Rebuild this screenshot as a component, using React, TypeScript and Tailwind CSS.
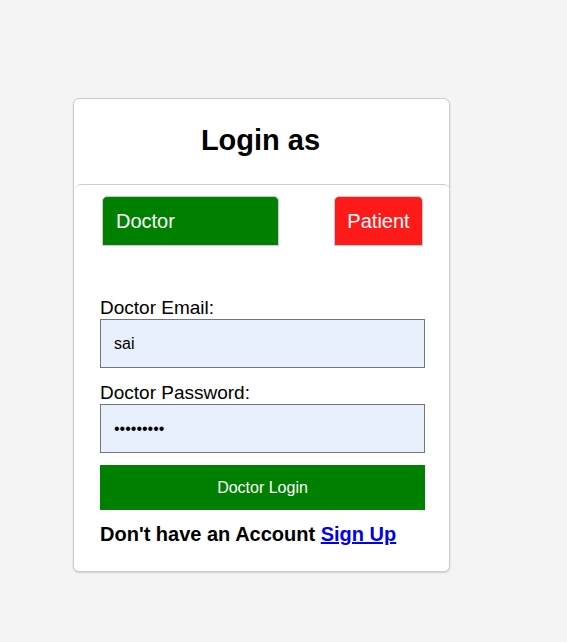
import React, { useState } from 'react';

const App: React.FC = () => {
  const [role, setRole] = useState<'doctor' | 'patient'>('doctor');

  return (
    <div className="min-h-screen bg-[#f4f4f4] pt-[98px] pl-[73px] font-['Liberation_Sans',Arial,sans-serif] text-black">
      <div className="w-[377px] bg-white border border-[#cccccc] rounded-[6px] shadow-[0_1px_2px_rgba(0,0,0,0.15)]">
        {/* header */}
        <div className="h-[85px] flex items-center justify-center">
          <h2 className="text-[29px] font-bold leading-none -ml-[2px] -mt-[2px]">Login as</h2>
        </div>

        {/* role + form */}
        <div className="border-t border-[#cccccc] rounded-t-[6px] -mr-px ml-px px-[25px] pt-[11px] pb-[25px]">
          <div className="flex justify-between pl-[2px] pr-[2px]">
            <button
              className="w-[177px] h-[50px] text-left pl-[13px] text-[20px] text-white bg-[#008000] border border-[#cccccc] rounded-t-[5px]"
              onClick={() => setRole('doctor')}
            >
              Doctor
            </button>
            <button
              className="w-[89px] h-[50px] text-center text-[20px] text-white bg-[#ff1a1a] border border-[#cccccc] rounded-t-[5px]"
              onClick={() => setRole('patient')}
            >
              Patient
            </button>
          </div>

          <form className="mt-[50px]" onSubmit={(e) => e.preventDefault()}>
            <label htmlFor="email" className="block text-[19px] leading-[23px]">
              Doctor Email:
            </label>
            <input
              id="email"
              type="text"
              defaultValue="sai"
              className="block w-[325px] h-[49px] px-[13px] text-[16px] bg-[#e8f0fe] border border-[#767676] outline-none"
            />

            <label htmlFor="password" className="block mt-[13px] text-[19px] leading-[23px]">
              Doctor Password:
            </label>
            <input
              id="password"
              type="password"
              defaultValue="sai123456"
              className="block w-[325px] h-[49px] px-[13px] text-[16px] bg-[#e8f0fe] border border-[#767676] outline-none"
            />

            <button
              type="submit"
              className="block mt-[12px] w-[325px] h-[45px] bg-[#008000] text-white text-[16px]"
            >
              {role === 'doctor' ? 'Doctor Login' : 'Patient Login'}
            </button>

            <p className="mt-[13px] text-[20px] font-bold leading-[23px]">
              Don't have an Account{' '}
              <a href="#" className="text-[#0000ee] underline">
                Sign Up
              </a>
            </p>
          </form>
        </div>
      </div>
    </div>
  );
};

export default App;
